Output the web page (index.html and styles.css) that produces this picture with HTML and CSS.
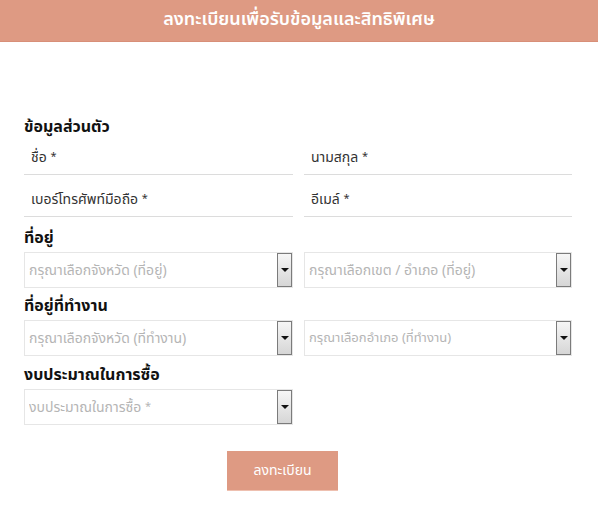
FILE: index.html
```html
<!DOCTYPE html>
<html lang="th">
<head>
<meta charset="utf-8">
<link rel="stylesheet" href="styles.css">
</head>
<body>
<header class="topbar">ลงทะเบียนเพื่อรับข้อมูลและสิทธิพิเศษ</header>
<main class="form">
  <h2 class="section-title first">ข้อมูลส่วนตัว</h2>
  <div class="grid fields">
    <div class="field">ชื่อ <span class="req">*</span></div>
    <div class="field">นามสกุล <span class="req">*</span></div>
    <div class="field">เบอร์โทรศัพท์มือถือ <span class="req">*</span></div>
    <div class="field">อีเมล์ <span class="req">*</span></div>
  </div>
  <h2 class="section-title">ที่อยู่</h2>
  <div class="grid">
    <div class="select"><span class="ph">กรุณาเลือกจังหวัด (ที่อยู่)</span><span class="arrow"></span></div>
    <div class="select"><span class="ph">กรุณาเลือกเขต / อำเภอ (ที่อยู่)</span><span class="arrow"></span></div>
  </div>
  <h2 class="section-title">ที่อยู่ที่ทำงาน</h2>
  <div class="grid">
    <div class="select"><span class="ph">กรุณาเลือกจังหวัด (ที่ทำงาน)</span><span class="arrow"></span></div>
    <div class="select"><span class="ph small">กรุณาเลือกอำเภอ (ที่ทำงาน)</span><span class="arrow"></span></div>
  </div>
  <h2 class="section-title last">งบประมาณในการซื้อ</h2>
  <div class="grid">
    <div class="select"><span class="ph">งบประมาณในการซื้อ <span class="req">*</span></span><span class="arrow"></span></div>
  </div>
  <div class="actions"><button class="submit" type="button">ลงทะเบียน</button></div>
</main>
</body>
</html>
```
FILE: styles.css
```css
* { box-sizing: border-box; }
body {
  margin: 0;
  background: #fff;
  font-family: "Noto Sans Thai", "Noto Sans", "DejaVu Sans", sans-serif;
  color: #222;
}
.topbar {
  height: 42px;
  background: #de9a83;
  border-bottom: 1px solid #d88f78;
  color: #fff;
  font-size: 18px;
  font-weight: 600;
  text-align: center;
  line-height: 40px;
}
.form {
  padding: 73px 0 0 24px;
  width: 572px;
}
.section-title {
  margin: 6px 0 2px;
  font-size: 16px;
  font-weight: 700;
  line-height: 24px;
  color: #111;
}
.section-title.first { margin-top: 0; margin-bottom: 0; }
.section-title.last { margin-top: 7px; }
.grid {
  display: grid;
  grid-template-columns: 269px 268px;
  column-gap: 11px;
  row-gap: 6px;
}
.grid.fields { padding-bottom: 3px; }
.field {
  height: 36px;
  border-bottom: 1px solid #dcdcdc;
  padding-left: 7px;
  font-size: 14px;
  line-height: 35px;
  color: #333;
}
.req {
  font-size: 11px;
  vertical-align: 2px;
}
.select {
  display: flex;
  align-items: center;
  height: 36px;
  border: 1px solid #e6e6e6;
  padding-left: 4px;
}
.ph {
  flex: 1;
  font-size: 14px;
  color: #b5b5b5;
  white-space: nowrap;
  overflow: hidden;
}
.ph.small { font-size: 13px; }
.arrow {
  width: 15px;
  height: 34px;
  border: 1px solid #7b7b7b;
  background: linear-gradient(#f6f6f6, #d6d6d6);
  display: flex;
  align-items: center;
  justify-content: center;
}
.arrow::after {
  content: "";
  border-left: 4px solid transparent;
  border-right: 4px solid transparent;
  border-top: 4px solid #111;
}
.actions {
  padding: 26px 0 0 203px;
}
.submit {
  width: 111px;
  height: 40px;
  border: 0;
  border-bottom: 1px solid #eec0b0;
  background: #de9a83;
  color: #fff;
  font-family: inherit;
  font-size: 14px;
  padding: 0;
}
```
